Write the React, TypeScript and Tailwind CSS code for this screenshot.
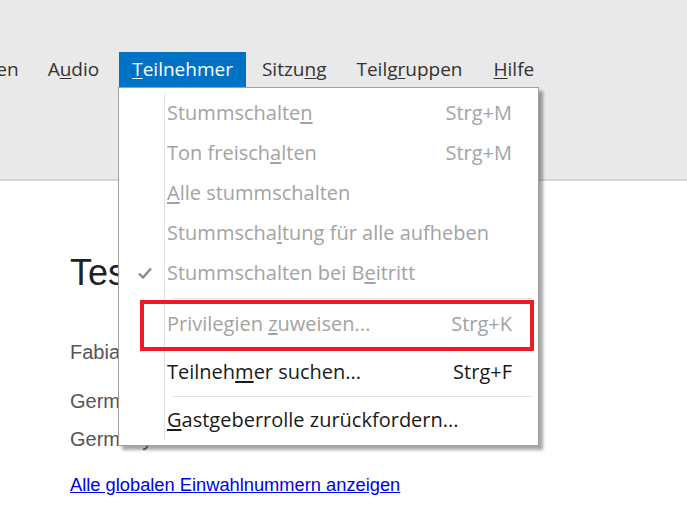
import React from "react";

type Item =
  | { kind: "item"; pre: string; key: string; post: string; shortcut?: string; disabled?: boolean; checked?: boolean; h: string }
  | { kind: "sep"; h: string };

const items: Item[] = [
  { kind: "item", pre: "Stummschalte", key: "n", post: "", shortcut: "Strg+M", disabled: true, h: "h-10" },
  { kind: "item", pre: "Ton freisch", key: "a", post: "lten", shortcut: "Strg+M", disabled: true, h: "h-10" },
  { kind: "item", pre: "", key: "A", post: "lle stummschalten", disabled: true, h: "h-10" },
  { kind: "item", pre: "Stummscha", key: "l", post: "tung für alle aufheben", disabled: true, h: "h-10" },
  { kind: "item", pre: "Stummschalten bei B", key: "e", post: "itritt", disabled: true, checked: true, h: "h-10" },
  { kind: "sep", h: "h-[11px]" },
  { kind: "item", pre: "Privilegien ", key: "z", post: "uweisen...", shortcut: "Strg+K", disabled: true, h: "h-10" },
  { kind: "item", pre: "Teilneh", key: "m", post: "er suchen...", shortcut: "Strg+F", h: "h-12 pt-2" },
  { kind: "sep", h: "h-[8px]" },
  { kind: "item", pre: "", key: "G", post: "astgeberrolle zurückfordern...", h: "h-10" },
];

const menus = [
  { pre: "", key: "", post: "Anzeigen", cls: "px-[13px]" },
  { pre: "A", key: "u", post: "dio", cls: "pl-[13px] pr-[17px]" },
  { pre: "", key: "T", post: "eilnehmer", active: true, cls: "px-[13px]" },
  { pre: "Sitzu", key: "n", post: "g", cls: "px-[13px]" },
  { pre: "Teilg", key: "r", post: "uppen", cls: "pl-[14px] pr-[13px]" },
  { pre: "", key: "H", post: "ilfe", cls: "pl-[15px] pr-[13px]" },
];

export default function App() {
  return (
    <div className="relative w-[687px] h-[507px] overflow-hidden bg-white font-['Liberation_Sans',Arial,sans-serif]">
      {/* top band with menu bar */}
      <div className="h-[181px] pt-[52px] bg-[#e9e9e9] border-b-2 border-[#d6d6d6]">
        <div className="flex items-stretch h-[35px] ml-[-75px] gap-[3px] font-['Open_Sans',sans-serif] text-[19px] text-[#333]">
          {menus.map((m) => (
            <div
              key={m.post}
              className={
                "flex items-center whitespace-nowrap " +
                m.cls +
                (m.active ? " bg-[#0072c6] text-white" : "")
              }
            >
              {m.pre}
              <span className="underline underline-offset-2">{m.key}</span>
              {m.post}
            </div>
          ))}
        </div>
      </div>

      {/* page content behind the menu */}
      <div className="pl-[70px] text-[#555]">
        <h1 className="mt-[74px] text-[36px] leading-none text-[#222]">Testmeeting</h1>
        <p className="mt-[51px] text-[20px] leading-none">Fabian Schmidt</p>
        <p className="mt-[29px] text-[20px] leading-none">Germany Teil 1</p>
        <div className="mt-[18px] flex text-[20px] leading-none">
          <span className="w-[215px]">Germany Teil 2</span>
          <span>+49-69-2381-1100</span>
        </div>
        <a href="#" className="inline-block mt-[27px] text-[18.3px] leading-none text-[#0000ee] underline">
          Alle globalen Einwahlnummern anzeigen
        </a>
      </div>

      {/* dropdown */}
      <div className="absolute left-[118px] top-[87px] w-[421px] h-[359px] bg-white border border-[#a0a0a0] shadow-[4px_4px_3px_rgba(0,0,0,0.35)] pt-[5px] font-['Open_Sans',sans-serif] text-[20px]">
        <div className="absolute left-[45px] top-[5px] bottom-[5px] w-px bg-[#e2e2e2]" />
        {items.map((it, i) =>
          it.kind === "sep" ? (
            <div key={i} className={"flex items-center pl-[54px] pr-[5px] " + it.h}>
              <div className="h-px w-full bg-[#e2e2e2]" />
            </div>
          ) : (
            <div
              key={i}
              className={
                "relative flex items-center pl-[48px] pr-[26px] whitespace-nowrap " +
                it.h +
                (it.disabled ? " text-[#a3a3a3]" : " text-[#1a1a1a]")
              }
            >
              {it.checked && (
                <svg className="absolute left-[18px] top-1/2 -translate-y-1/2" width="16" height="13" viewBox="0 0 16 13">
                  <path d="M2 7 L6 11 L14 2" fill="none" stroke="#8a8a8a" strokeWidth="2.4" />
                </svg>
              )}
              <span className="flex-1">
                {it.pre}
                <span className="underline underline-offset-2">{it.key}</span>
                {it.post}
              </span>
              {it.shortcut && <span>{it.shortcut}</span>}
            </div>
          )
        )}
      </div>

      {/* red highlight annotation */}
      <div className="absolute left-[140px] top-[300px] w-[394px] h-[51px] border-4 border-[#ec1c24]" />
    </div>
  );
}
